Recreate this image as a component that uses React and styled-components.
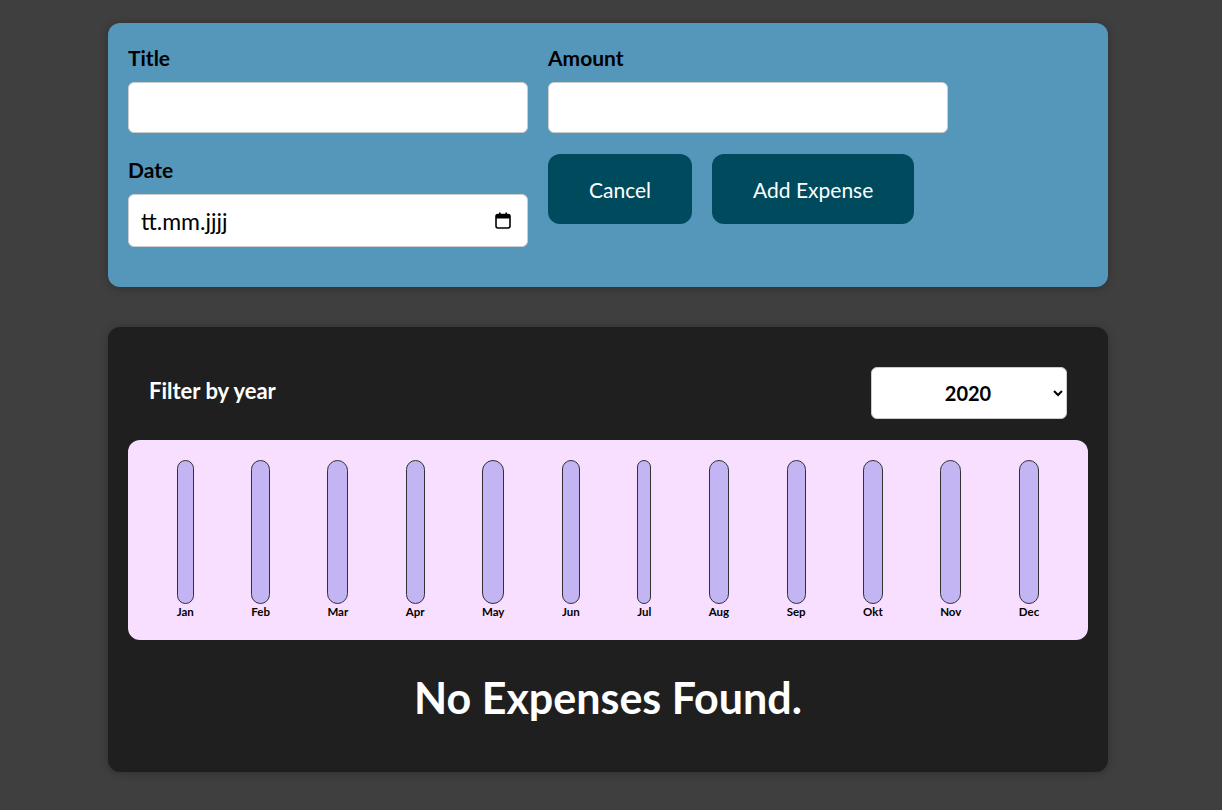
import React, { useState } from "react";
import styled, { createGlobalStyle } from "styled-components";

const GlobalStyle = createGlobalStyle`
  * { box-sizing: border-box; }
  html, body {
    margin: 0;
    padding: 0;
    background: #3f3f3f;
    font-family: "Lato", "Open Sans", sans-serif;
  }
`;

const Page = styled.div`
  width: 1000px;
  margin: 0 auto;
  padding: 23px 0 40px;
  position: relative;
  left: -3px;
  display: flex;
  flex-direction: column;
  gap: 40px;
`;

const FormCard = styled.form`
  background: #5596bb;
  border-radius: 12px;
  padding: 22px 20px 40px;
  box-shadow: 0 1px 8px rgba(0, 0, 0, 0.25);
`;

const Controls = styled.div`
  display: grid;
  grid-template-columns: 400px 400px;
  column-gap: 20px;
  row-gap: 21px;
`;

const Control = styled.div`
  display: flex;
  flex-direction: column;
  padding-top: ${(p) => p.$shift || 0}px;
`;

const Label = styled.label`
  display: block;
  font-weight: bold;
  font-size: 21px;
  line-height: 26px;
  margin-bottom: 11px;
  color: #000;
`;

const TextInput = styled.input`
  font: inherit;
  font-size: 20px;
  height: 51px;
  width: 400px;
  padding: 0 12px;
  border-radius: 6px;
  border: 1px solid #ccc;
  background: #fff;
  outline: none;
`;

const DateBox = styled.div`
  display: flex;
  align-items: center;
  height: 53px;
  width: 400px;
  padding: 0 16px 0 12px;
  border-radius: 6px;
  border: 1px solid #ccc;
  background: #fff;
`;

const DateField = styled.input`
  flex: 1;
  min-width: 0;
  border: none;
  outline: none;
  font: inherit;
  font-size: 23px;
  padding: 0;
  background: transparent;
  &::placeholder { color: #000; opacity: 1; }
`;

const Actions = styled.div`
  display: flex;
  align-items: flex-start;
  gap: 20px;
`;

const Button = styled.button`
  font: inherit;
  font-size: 21px;
  color: #fff;
  background: #004a5e;
  border: none;
  border-radius: 12px;
  height: 70px;
  padding: 0 41px;
  cursor: pointer;
`;

const ListCard = styled.div`
  background: #1f1f1f;
  border-radius: 12px;
  padding: 20px 20px 16px;
  box-shadow: 0 1px 8px rgba(0, 0, 0, 0.25);
`;

const FilterRow = styled.div`
  display: flex;
  align-items: center;
  justify-content: space-between;
  padding: 0 21px;
  margin: 20px 0 21px;
`;

const FilterLabel = styled.label`
  color: #fff;
  font-weight: bold;
  font-size: 22px;
  margin-top: -6px;
`;

const YearSelect = styled.select`
  font: inherit;
  font-weight: bold;
  font-size: 20px;
  width: 196px;
  height: 52px;
  border-radius: 6px;
  border: 1px solid #ccc;
  background: #fff;
  text-align: center;
  text-align-last: center;
  padding: 0 8px 0 18px;
  color: #000;
`;

const Chart = styled.div`
  background: #f8dfff;
  border-radius: 12px;
  padding: 20px;
  height: 200px;
  display: flex;
  justify-content: space-around;
`;

const BarColumn = styled.div`
  height: 100%;
  display: flex;
  flex-direction: column;
  align-items: center;
`;

const BarInner = styled.div`
  flex: 1;
  width: 100%;
  border: 1px solid #313131;
  border-radius: 12px;
  background: #c3b4f3;
  overflow: hidden;
  display: flex;
  flex-direction: column;
  justify-content: flex-end;
`;

const BarFill = styled.div`
  width: 100%;
  background: #4826b9;
`;

const BarLabel = styled.div`
  font-weight: bold;
  font-size: 11.5px;
  line-height: 16px;
  text-align: center;
  color: #000;
`;

const Fallback = styled.h2`
  color: #fff;
  text-align: center;
  font-size: 43px;
  line-height: 50px;
  margin: 33px 0 33px;
`;

const CalendarIcon = () => (
  <svg width="16" height="17" viewBox="0 0 16 17" fill="none">
    <rect x="1" y="2.5" width="14" height="13.5" rx="2" stroke="#000" strokeWidth="1.6" />
    <rect x="1" y="2.5" width="14" height="4" fill="#000" />
    <rect x="4" y="0.5" width="1.6" height="3" fill="#000" />
    <rect x="10.4" y="0.5" width="1.6" height="3" fill="#000" />
  </svg>
);

const months = ["Jan", "Feb", "Mar", "Apr", "May", "Jun", "Jul", "Aug", "Sep", "Okt", "Nov", "Dec"];

export default function App() {
  const [year, setYear] = useState("2020");
  return (
    <>
      <GlobalStyle />
      <Page>
        <FormCard onSubmit={(e) => e.preventDefault()}>
          <Controls>
            <Control>
              <Label>Title</Label>
              <TextInput type="text" />
            </Control>
            <Control>
              <Label>Amount</Label>
              <TextInput type="number" />
            </Control>
            <Control $shift={3}>
              <Label>Date</Label>
              <DateBox>
                <DateField type="text" placeholder="tt.mm.jjjj" />
                <CalendarIcon />
              </DateBox>
            </Control>
            <Actions>
              <Button type="button">Cancel</Button>
              <Button type="submit">Add Expense</Button>
            </Actions>
          </Controls>
        </FormCard>

        <ListCard>
          <FilterRow>
            <FilterLabel>Filter by year</FilterLabel>
            <YearSelect value={year} onChange={(e) => setYear(e.target.value)}>
              <option value="2022">2022</option>
              <option value="2021">2021</option>
              <option value="2020">2020</option>
              <option value="2019">2019</option>
            </YearSelect>
          </FilterRow>
          <Chart>
            {months.map((m) => (
              <BarColumn key={m}>
                <BarInner>
                  <BarFill style={{ height: "0%" }} />
                </BarInner>
                <BarLabel>{m}</BarLabel>
              </BarColumn>
            ))}
          </Chart>
          <Fallback>No Expenses Found.</Fallback>
        </ListCard>
      </Page>
    </>
  );
}
